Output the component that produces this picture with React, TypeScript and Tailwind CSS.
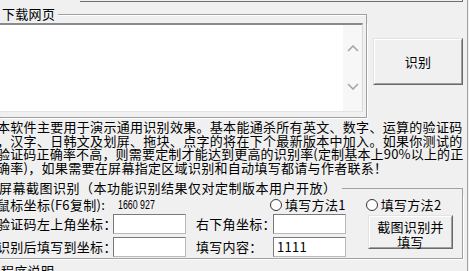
import React from "react";

function Sunken({ w, children }: { w: string; children?: React.ReactNode }) {
  return (
    <div className={`${w} h-[20px] border-t border-l border-t-[#7a7a7a] border-l-[#7a7a7a] border-b border-r border-b-[#b9b9b9] border-r-[#b9b9b9] bg-white flex items-center`}>
      {children}
    </div>
  );
}

function Radio({ label, gapLeft }: { label: string; gapLeft: string }) {
  return (
    <div className={`flex items-center ${gapLeft}`}>
      <div className="w-[12px] h-[12px] rounded-full border border-[#333333] bg-white" />
      <span className="ml-[3px] whitespace-nowrap">{label}</span>
    </div>
  );
}

export default function App() {
  return (
    <div className="w-[469px] h-[271px] overflow-hidden bg-[#f0f0f0] text-black text-[13px] tracking-[0.3px] font-['Noto_Sans_CJK_SC','Noto_Sans',sans-serif] flex">
      <div className="w-[467px] shrink-0 flex flex-col">
        {/* top strip */}
        <div className="h-[3px] shrink-0">
          <div className="ml-[80px] w-[383px] h-[2px] border-b border-r border-[#6e6e6e]" />
        </div>

        {/* 下载网页 section */}
        <div className="flex shrink-0">
          <div className="w-[367px] flex flex-col">
            <div className="flex h-[20px]">
              <span className="ml-[2px] leading-[22px] whitespace-nowrap">下载网页</span>
              <div className="flex-1 ml-[3px] mt-[11px] border-t border-r border-[#a0a0a0] shadow-[inset_0_1px_0_#ffffff]" />
            </div>
            <div className="border-r border-b border-[#a0a0a0] shadow-[1px_1px_0_#ffffff] pr-[3px] pb-[5px]">
              <div className="h-[89px] bg-white border-t-2 border-t-[#8a8a8a] border-r border-r-[#d9d9d9] border-b border-b-[#e3e3e3] flex justify-end">
                <div className="w-[19px] bg-[#f7f7f7] flex flex-col items-center">
                  <svg width="12" height="7" viewBox="0 0 12 7" className="mt-[20px]">
                    <polyline points="1,6 6,1 11,6" fill="none" stroke="#a6a6a6" strokeWidth="1.6" />
                  </svg>
                  <svg width="12" height="7" viewBox="0 0 12 7" className="mt-[31px]">
                    <polyline points="1,1 6,6 11,1" fill="none" stroke="#a6a6a6" strokeWidth="1.6" />
                  </svg>
                </div>
              </div>
            </div>
          </div>
          <div className="ml-[6px] mt-[35px]">
            <div className="w-[90px] h-[47px] border-t border-l border-t-[#e3e3e3] border-l-[#e3e3e3] border-b border-r border-b-[#696969] border-r-[#696969]">
              <div className="w-full h-full border-t border-l border-t-white border-l-white border-b border-r border-b-[#a0a0a0] border-r-[#a0a0a0] bg-[#f0f0f0] flex items-center justify-center">
                <span>识别</span>
              </div>
            </div>
          </div>
        </div>

        {/* description */}
        <div className="mt-[2px] ml-[-3px] leading-[13.5px] whitespace-nowrap">
          <div className="tracking-[0.3px]">本软件主要用于演示通用识别效果。基本能通杀所有英文、数字、运算的验证码</div>
          <div className="tracking-[0.3px]">，汉字、日韩文及划屏、拖块、点字的将在下个最新版本中加入。如果你测试的</div>
          <div className="tracking-[0.18px]">验证码正确率不高，则需要定制才能达到更高的识别率(定制基本上90%以上的正</div>
          <div className="tracking-[0.3px]">确率)，如果需要在屏幕指定区域识别和自动填写都请与作者联系！</div>
        </div>

        {/* 屏幕截图识别 group */}
        <div className="w-[463px] mt-[7px] flex flex-col shrink-0">
          <div className="flex h-[14px]">
            <span className="ml-[-1px] leading-[14px] whitespace-nowrap tracking-[0.5px]">屏幕截图识别（本功能识别结果仅对定制版本用户开放）</span>
            <div className="flex-1 ml-[5px] mt-[7px] border-t border-r border-[#a0a0a0]" />
          </div>
          <div className="border-r border-b border-[#a0a0a0] shadow-[1px_1px_0_#ffffff] pb-[1px]">
            {/* row 1 */}
            <div className="flex items-center h-[18px] mt-[1px]">
              <span className="w-[121px] ml-[-3px] whitespace-nowrap">鼠标坐标(F6复制):</span>
              <div className="w-[152px] flex items-center">
                <span className="inline-block whitespace-nowrap font-['Liberation_Sans',sans-serif] text-[13px] leading-[16px] tracking-normal [transform:scaleX(0.68)] origin-left">1660 927</span>
              </div>
              <Radio label="填写方法1" gapLeft="" />
              <Radio label="填写方法2" gapLeft="ml-[20px]" />
            </div>
            {/* rows 2-3 */}
            <div className="flex">
              <div className="flex flex-col gap-[3px]">
                <div className="flex items-center h-[20px]">
                  <span className="w-[116px] ml-[-3px] whitespace-nowrap">验证码左上角坐标：</span>
                  <Sunken w="w-[73px]" />
                  <span className="w-[77px] ml-[10px] whitespace-nowrap">右下角坐标：</span>
                  <Sunken w="w-[73px]" />
                </div>
                <div className="flex items-center h-[20px]">
                  <span className="w-[116px] ml-[-3px] whitespace-nowrap">识别后填写到坐标：</span>
                  <Sunken w="w-[73px]" />
                  <span className="w-[77px] ml-[10px] whitespace-nowrap">填写内容：</span>
                  <Sunken w="w-[73px]">
                    <span className="ml-[3px] leading-[16px]">1111</span>
                  </Sunken>
                </div>
              </div>
              <div className="ml-[22px] mt-[1px]">
                <div className="w-[85px] h-[34px] border-t border-l border-t-[#e3e3e3] border-l-[#e3e3e3] border-b border-r border-b-[#696969] border-r-[#696969]">
                  <div className="w-full h-full border-t border-l border-t-white border-l-white border-b border-r border-b-[#a0a0a0] border-r-[#a0a0a0] bg-[#f0f0f0] flex flex-col items-center justify-center leading-[14.5px] pt-[5px]">
                    <span>截图识别并</span>
                    <span>填写</span>
                  </div>
                </div>
              </div>
            </div>
          </div>
        </div>

        {/* 程序说明 */}
        <div className="mt-[5px] ml-[1px] leading-[14px] whitespace-nowrap">程序说明</div>
      </div>
      <div className="w-px h-full bg-[#a0a0a0] shrink-0" />
      <div className="flex-1 h-full bg-[#f0f0f0]" />
    </div>
  );
}
